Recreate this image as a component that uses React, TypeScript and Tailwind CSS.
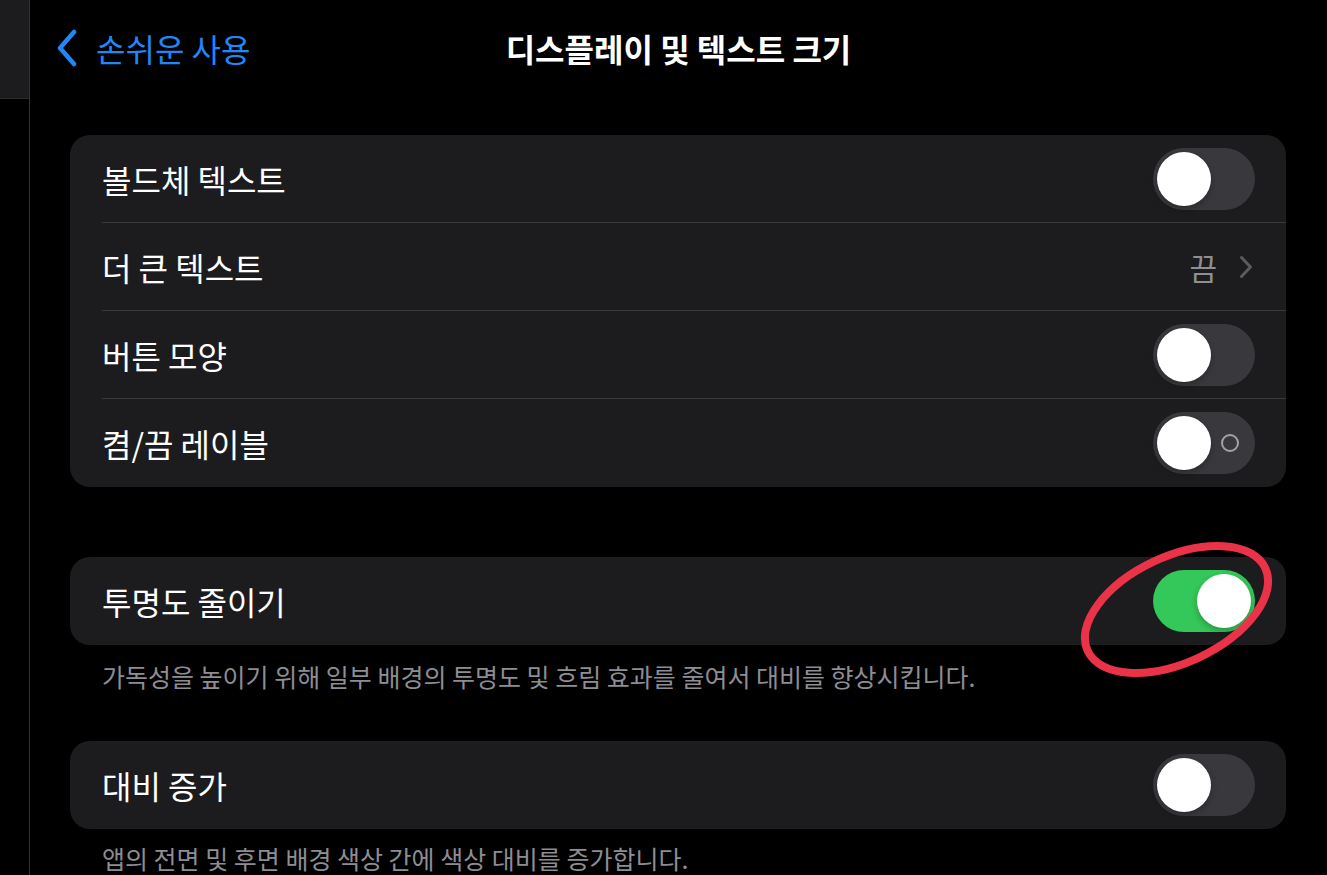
import React from "react";

type Row = {
  label: string;
  kind: "toggle" | "link" | "toggleLabel";
  value?: string;
};

const displayRows: Row[] = [
  { label: "볼드체 텍스트", kind: "toggle" },
  { label: "더 큰 텍스트", kind: "link", value: "끔" },
  { label: "버튼 모양", kind: "toggle" },
  { label: "켬/끔 레이블", kind: "toggleLabel" },
];

function Toggle({ on, showLabel }: { on?: boolean; showLabel?: boolean }) {
  return (
    <div
      className={`relative w-[102px] h-[62px] rounded-full flex items-center px-[4px] ${
        on ? "bg-[#34c759] justify-end" : "bg-[#39393d] justify-start"
      }`}
    >
      <div className="w-[54px] h-[54px] rounded-full bg-white shadow-[0_3px_6px_rgba(0,0,0,0.25)]" />
      {showLabel && (
        <div className="absolute right-[16px] top-[22px] w-[18px] h-[18px] rounded-full border-2 border-[#a2a2a7]" />
      )}
    </div>
  );
}

function Chevron({ className }: { className?: string }) {
  return (
    <svg viewBox="0 0 14 24" className={className} fill="none">
      <path
        d="M2.5 2.5 L11.5 12 L2.5 21.5"
        stroke="currentColor"
        strokeWidth="3"
        strokeLinecap="round"
        strokeLinejoin="round"
      />
    </svg>
  );
}

export default function App() {
  return (
    <div className="w-[1327px] h-[875px] bg-black flex overflow-hidden font-['Noto_Sans_CJK_KR','Noto_Sans',sans-serif] text-white">
      {/* sidebar edge */}
      <div className="w-[30px] shrink-0 border-r border-[#333336] flex flex-col">
        <div className="h-[99px] bg-[#1c1c1e] border-b border-[#2c2c2e]" />
      </div>

      <div className="relative flex-1 flex flex-col">
        {/* header */}
        <div className="relative h-[96px] flex items-center justify-center">
          <div className="absolute left-[26px] top-[29px] flex items-center gap-[18px] text-[#1f87f7]">
            <svg viewBox="0 0 22 38" className="w-[22px] h-[38px]" fill="none">
              <path
                d="M18 3 L4 19 L18 35"
                stroke="currentColor"
                strokeWidth="4.5"
                strokeLinecap="round"
                strokeLinejoin="round"
              />
            </svg>
            <span className="text-[32px] leading-none">손쉬운 사용</span>
          </div>
          <h1 className="text-[32px] font-semibold leading-none">디스플레이 및 텍스트 크기</h1>
        </div>

        <div className="pt-[39px] pl-[40px] pr-[41px] flex flex-col">
          {/* group 1 */}
          <div className="bg-[#1c1c1e] rounded-[20px] overflow-hidden">
            {displayRows.map((row, i) => (
              <div key={row.label} className="pl-[32px]">
                <div
                  className={`h-[88px] flex items-center justify-between pr-[31px] ${
                    i < displayRows.length - 1 ? "border-b border-[#38383a]" : ""
                  }`}
                >
                  <span className="text-[32px] leading-none">{row.label}</span>
                  {row.kind === "link" ? (
                    <div className="flex items-center gap-[22px] pr-[2px]">
                      <span className="text-[30px] leading-none text-[#8e8e93]">{row.value}</span>
                      <Chevron className="w-[14px] h-[24px] text-[#5a5a5f]" />
                    </div>
                  ) : (
                    <Toggle showLabel={row.kind === "toggleLabel"} />
                  )}
                </div>
              </div>
            ))}
          </div>

          {/* group 2 */}
          <div className="mt-[70px] bg-[#1c1c1e] rounded-[20px] h-[88px] pl-[32px] pr-[31px] flex items-center justify-between">
            <span className="text-[32px] leading-none">투명도 줄이기</span>
            <Toggle on />
          </div>
          <div className="h-[96px] pt-[16px] pl-[32px]">
            <p className="text-[25px] leading-[30px] text-[#8d8d93]">
              가독성을 높이기 위해 일부 배경의 투명도 및 흐림 효과를 줄여서 대비를 향상시킵니다.
            </p>
          </div>

          {/* group 3 */}
          <div className="bg-[#1c1c1e] rounded-[20px] h-[88px] pl-[32px] pr-[31px] flex items-center justify-between">
            <span className="text-[32px] leading-none">대비 증가</span>
            <Toggle />
          </div>
          <div className="pt-[14px] pl-[32px]">
            <p className="text-[25px] leading-[30px] text-[#8d8d93]">
              앱의 전면 및 후면 배경 색상 간에 색상 대비를 증가합니다.
            </p>
          </div>
        </div>

        {/* red annotation ring */}
        <svg
          className="absolute left-[1040px] top-[530px] w-[280px] h-[160px] pointer-events-none"
          viewBox="0 0 280 160"
          fill="none"
        >
          <ellipse
            cx="106.5"
            cy="79.5"
            rx="98"
            ry="53"
            transform="rotate(-25 106.5 79.5)"
            stroke="#ea3248"
            strokeWidth="8"
          />
        </svg>
      </div>
    </div>
  );
}
